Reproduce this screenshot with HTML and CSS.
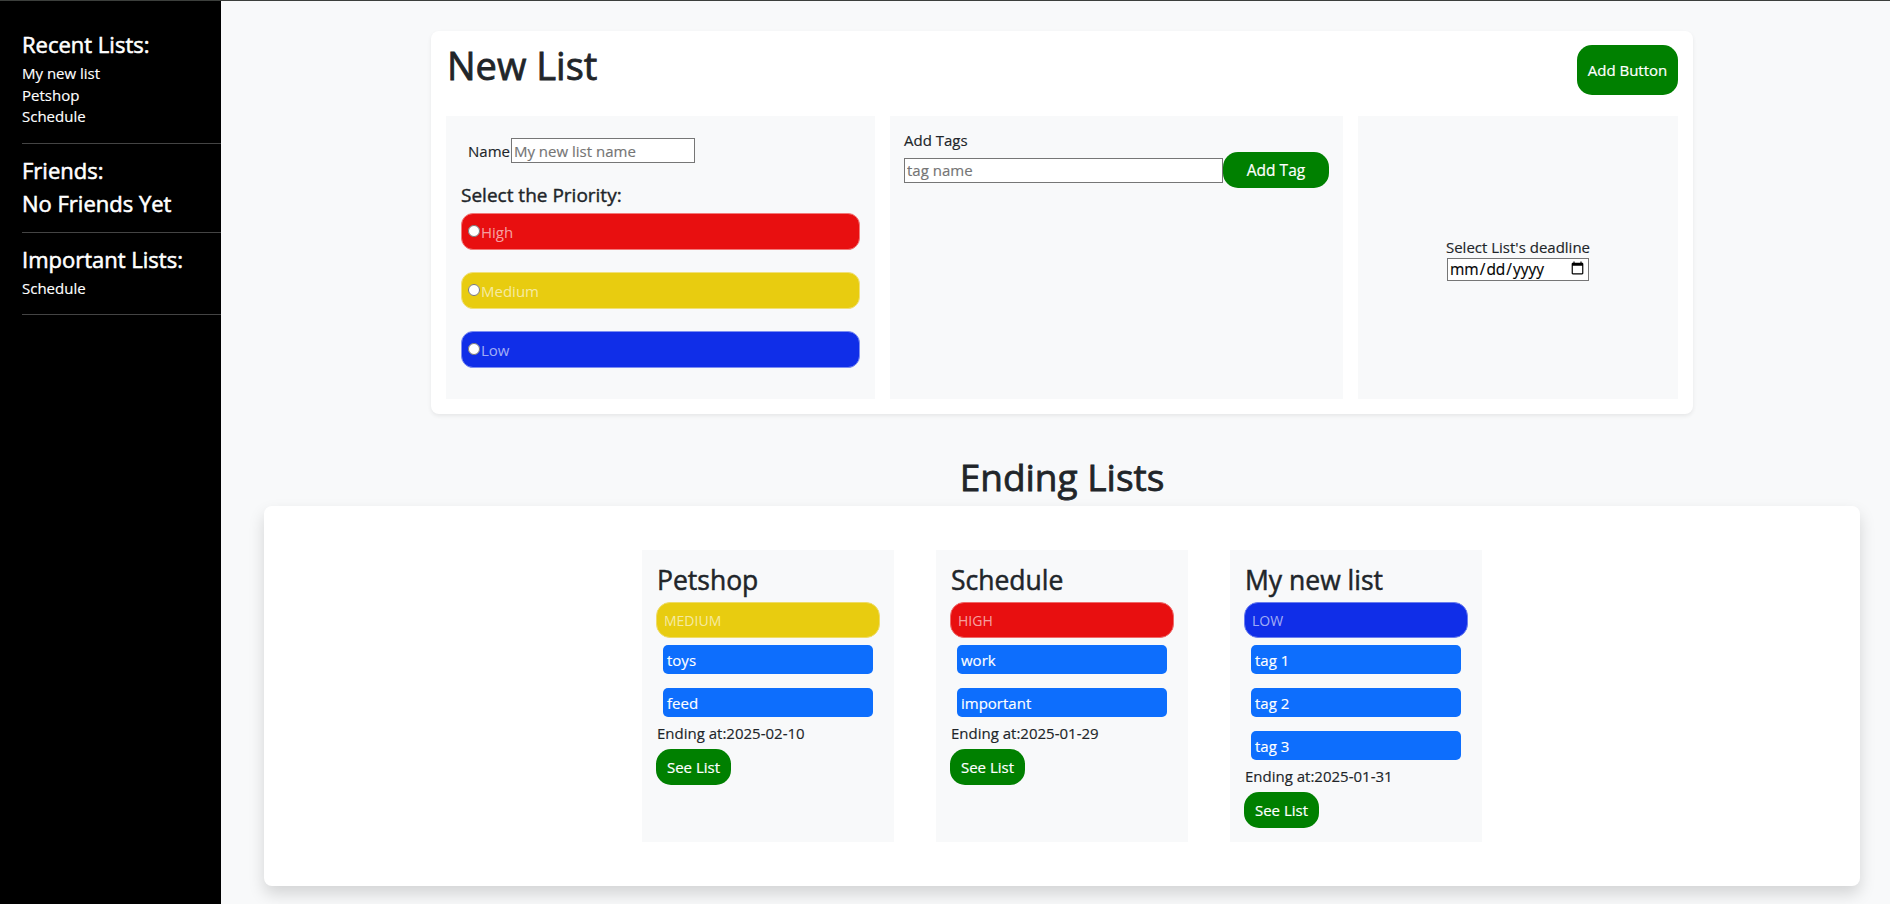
FILE: index.html
```html
<!DOCTYPE html>
<html lang="en">
<head>
<meta charset="utf-8">
<title>Lists</title>
<link rel="stylesheet" href="styles.css">
</head>
<body>
<aside class="sidebar">
  <section class="side-section side-first">
    <h3 class="side-title">Recent Lists:</h3>
    <ul class="side-list">
      <li>My new list</li>
      <li>Petshop</li>
      <li>Schedule</li>
    </ul>
  </section>
  <section class="side-section side-friends">
    <h3 class="side-title">Friends:</h3>
    <p class="side-title side-empty">No Friends Yet</p>
  </section>
  <section class="side-section">
    <h3 class="side-title">Important Lists:</h3>
    <ul class="side-list">
      <li>Schedule</li>
    </ul>
  </section>
</aside>
<main class="main">
  <section class="card new-list">
    <div class="new-list-header">
      <h1 class="new-list-title">New List</h1>
      <button class="btn btn-add">Add Button</button>
    </div>
    <div class="panels">
      <div class="panel panel-name">
        <div class="name-row">
          <label class="name-label" for="listname">Name</label>
          <input class="text-input name-input" id="listname" type="text" placeholder="My new list name">
        </div>
        <h5 class="priority-title">Select the Priority:</h5>
        <div class="priority-options">
          <label class="priority priority-high"><input class="priority-radio" type="radio" name="priority">High</label>
          <label class="priority priority-medium"><input class="priority-radio" type="radio" name="priority">Medium</label>
          <label class="priority priority-low"><input class="priority-radio" type="radio" name="priority">Low</label>
        </div>
      </div>
      <div class="panel panel-tags">
        <label class="tags-label" for="tagname">Add Tags</label>
        <div class="tags-row">
          <input class="text-input tag-input" id="tagname" type="text" placeholder="tag name">
          <button class="btn btn-tag">Add Tag</button>
        </div>
      </div>
      <div class="panel panel-deadline">
        <label class="deadline-label" for="deadline">Select List's deadline</label>
        <input class="date-input" id="deadline" type="date">
      </div>
    </div>
  </section>

  <h2 class="ending-title">Ending Lists</h2>

  <section class="card ending-card">
    <div class="list-cards">
      <article class="list-card">
        <h3 class="list-name">Petshop</h3>
        <div class="pill pill-medium">MEDIUM</div>
        <div class="tag">toys</div>
        <div class="tag">feed</div>
        <p class="ending-at">Ending at:2025-02-10</p>
        <button class="btn btn-see">See List</button>
      </article>
      <article class="list-card">
        <h3 class="list-name">Schedule</h3>
        <div class="pill pill-high">HIGH</div>
        <div class="tag">work</div>
        <div class="tag">important</div>
        <p class="ending-at">Ending at:2025-01-29</p>
        <button class="btn btn-see">See List</button>
      </article>
      <article class="list-card">
        <h3 class="list-name">My new list</h3>
        <div class="pill pill-low">LOW</div>
        <div class="tag">tag 1</div>
        <div class="tag">tag 2</div>
        <div class="tag">tag 3</div>
        <p class="ending-at">Ending at:2025-01-31</p>
        <button class="btn btn-see">See List</button>
      </article>
    </div>
  </section>
</main>
</body>
</html>
```

FILE: styles.css
```css
* {
  box-sizing: border-box;
}

html, body {
  margin: 0;
  padding: 0;
}

body {
  display: flex;
  min-height: 100vh;
  border-top: 1px solid #3c3f3c;
  background: #f8f9fa;
  font-family: "Open Sans", "Liberation Sans", sans-serif;
  font-size: 15px;
  color: #212529;
  -webkit-text-stroke: 0.15px currentColor;
}

/* ---------- Sidebar ---------- */
.sidebar {
  width: 221px;
  flex-shrink: 0;
  background: #000;
  color: #fff;
  padding-left: 22px;
}

.side-section {
  padding: 13px 0 15px;
  border-bottom: 1px solid #444;
}

.side-first {
  padding-top: 30px;
}

.side-title {
  margin: 0 0 6px;
  font-size: 22px;
  font-weight: 400;
  line-height: 26px;
  -webkit-text-stroke: 0.55px currentColor;
}

.side-friends .side-empty {
  margin: 7px 0 1px;
}

.side-list {
  list-style: none;
  margin: 0;
  padding: 0;
  font-size: 15px;
  line-height: 21.6px;
}

/* ---------- Main ---------- */
.main {
  flex: 1;
  padding: 30px 30px 10px 43px;
}

.card {
  background: #fff;
  border-radius: 8px;
}

.new-list {
  width: 1262px;
  margin: 0 auto;
  padding: 15px;
  box-shadow: 0 2px 4px rgba(0, 0, 0, 0.075);
}

.new-list-header {
  display: flex;
  justify-content: space-between;
  align-items: flex-start;
  margin-bottom: 21px;
}

.new-list-title {
  margin: 0;
  font-size: 38px;
  font-weight: 400;
  line-height: 38px;
  padding-left: 1px;
  -webkit-text-stroke: 0.8px currentColor;
}

.btn {
  border: none;
  background: #008000;
  color: #fff;
  font-family: inherit;
  font-size: 15px;
  border-radius: 15px;
  padding: 0;
  white-space: nowrap;
  cursor: pointer;
  -webkit-text-stroke: 0.2px currentColor;
}

.btn-add {
  height: 50px;
  width: 101px;
  margin-top: -1px;
}

.panels {
  display: grid;
  grid-template-columns: 429px 453px 320px;
  gap: 15px;
  height: 283px;
}

.panel {
  background: #f8f9fa;
}

/* name + priority */
.panel-name {
  padding: 15px;
}

.name-row {
  display: flex;
  align-items: center;
  height: 25px;
  margin: 7px 0 0 7px;
}

.name-label {
  font-size: 15px;
}

.text-input {
  height: 25px;
  border: 1px solid #767676;
  padding: 0 2px;
  font-family: inherit;
  font-size: 15px;
  color: #212529;
  background: #fff;
}

.text-input::placeholder {
  color: #757575;
}

.name-input {
  width: 184px;
  margin-left: 1px;
}

.priority-title {
  margin: 20px 0 6px;
  font-size: 19px;
  font-weight: 400;
  line-height: 24px;
  -webkit-text-stroke: 0.4px currentColor;
}

.priority-options {
  display: flex;
  flex-direction: column;
  gap: 22px;
}

.priority {
  display: flex;
  align-items: center;
  height: 37px;
  border-radius: 12px;
  border: 1px solid;
  color: rgba(255, 255, 255, 0.62);
  font-size: 15px;
  -webkit-text-stroke: 0;
}

.priority-radio {
  width: 12px;
  height: 12px;
  margin: 0 1px 1px 6px;
}

.priority-high {
  background: #e80f10;
  border-color: #f27a7a;
}

.priority-medium {
  background: #e8cc10;
  border-color: #f1e07a;
}

.priority-low {
  background: #102ee8;
  border-color: #7d8ef2;
}

/* tags */
.panel-tags {
  padding: 13px 14px;
}

.tags-label {
  display: block;
  font-size: 15px;
  line-height: 22px;
  margin-bottom: 1px;
}

.tags-row {
  display: flex;
  align-items: center;
}

.tag-input {
  flex: 1;
}

.btn-tag {
  width: 106px;
  height: 36px;
  font-size: 15.5px;
}

/* deadline */
.panel-deadline {
  display: flex;
  flex-direction: column;
  align-items: center;
  justify-content: center;
  padding-top: 2px;
}

.deadline-label {
  font-size: 15px;
  line-height: 20px;
  margin-bottom: 1px;
}

.date-input {
  width: 142px;
  height: 23px;
  border: 1px solid #767676;
  padding: 0 1px;
  font-family: inherit;
  font-size: 15.5px;
  color: #000;
  background: #fff;
}

/* ---------- Ending lists ---------- */
.ending-title {
  margin: 41px 0 7px;
  text-align: center;
  font-size: 37px;
  font-weight: 400;
  line-height: 44px;
  -webkit-text-stroke: 0.8px currentColor;
}

.ending-card {
  padding: 44px;
  box-shadow: 0 8px 16px rgba(0, 0, 0, 0.15);
}

.list-cards {
  display: flex;
  justify-content: center;
  gap: 42px;
}

.list-card {
  width: 252px;
  background: #f8f9fa;
  padding: 14px;
  display: flex;
  flex-direction: column;
}

.list-name {
  margin: 0 0 6px 1px;
  font-size: 26.5px;
  font-weight: 400;
  line-height: 32px;
  -webkit-text-stroke: 0.5px currentColor;
}

.pill {
  height: 36px;
  border-radius: 14px;
  display: flex;
  align-items: center;
  padding-left: 7px;
  font-size: 14px;
  color: rgba(255, 255, 255, 0.62);
  border: 1px solid;
  -webkit-text-stroke: 0;
}

.pill-medium {
  background: #e8cc10;
  border-color: #efdc66;
}

.pill-high {
  background: #e80f10;
  border-color: #ef6a6a;
}

.pill-low {
  background: #102ee8;
  border-color: #6a7def;
}

.tag {
  height: 29px;
  margin: 7px 7px;
  padding-left: 4px;
  background: #0d6efd;
  color: #fff;
  border-radius: 5px;
  display: flex;
  align-items: center;
  font-size: 15px;
}

.ending-at {
  margin: 0 0 7px 1px;
  font-size: 15px;
  line-height: 18px;
}

.btn-see {
  align-self: flex-start;
  width: 75px;
  height: 36px;
}
```
